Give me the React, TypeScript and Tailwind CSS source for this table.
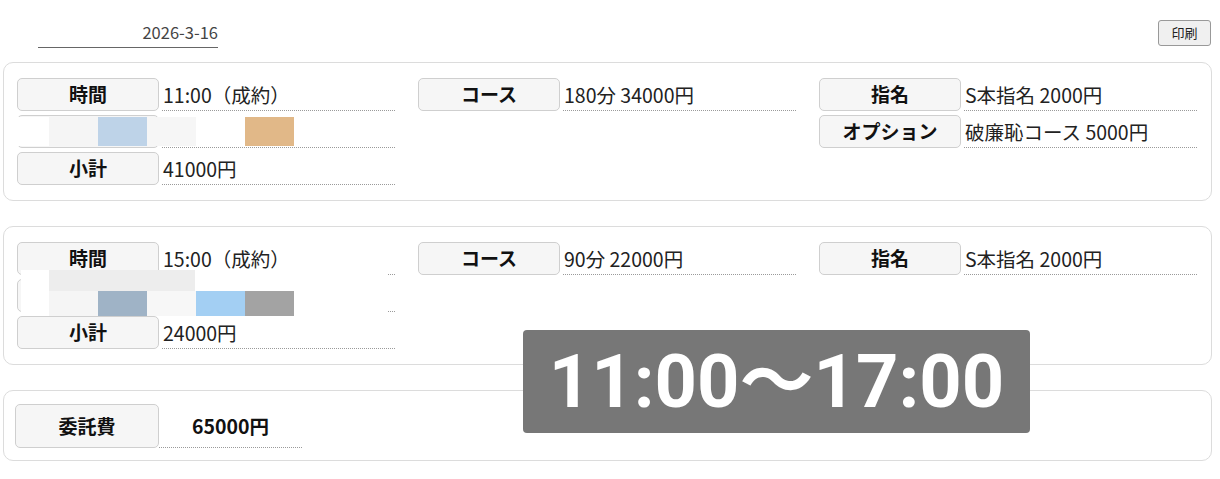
type Item = { label: string; value: string };

function Field({ label, value }: Item) {
  return (
    <div className="flex h-[33px]">
      <div className="flex w-[142px] shrink-0 items-center justify-center rounded-[5px] border border-[#cfcfcf] bg-[#f6f6f6] text-[19px] font-bold text-[#111]">
        {label}
      </div>
      <div className="ml-[3px] w-[233px] whitespace-nowrap border-b border-dotted border-[#9a9a9a] pl-[1px] text-[19.5px] leading-[33px] text-[#222]">
        {value}
      </div>
    </div>
  );
}

function Column({ items }: { items: Item[] }) {
  return (
    <div className="flex flex-col gap-[4px]">
      {items.map((it, i) => (
        <Field key={i} {...it} />
      ))}
    </div>
  );
}

// pixelated blocks that cover a name in the original
function Mosaic({ cells }: { cells: string[] }) {
  return (
    <div className="flex">
      {cells.map((c, i) => (
        <div key={i} className="h-[29px] w-[49px]" style={{ background: c }} />
      ))}
    </div>
  );
}

export default function App() {
  return (
    <div className="relative h-[479px] w-[1220px] overflow-hidden bg-white font-['Noto_Sans_CJK_JP',sans-serif] text-[#222]">
      <div className="flex items-start justify-between pr-[9px] pt-[20px]">
        <div className="ml-[38px] mt-[-20px] flex h-[48px] w-[180px] items-end justify-end border-b border-[#666] pb-[6px] text-[16.5px] leading-[18px] text-[#444]">
          2026-3-16
        </div>
        <button className="h-[26px] w-[53px] rounded-[3px] border border-[#999] bg-[#f0f0f0] text-[13px] leading-[24px] text-[#222]">
          印刷
        </button>
      </div>

      <div className="mx-[3px] mt-[14px] flex w-[1209px] flex-col gap-[25px]">
        {/* 1件目 */}
        <div className="relative grid grid-cols-[378px_378px_378px] gap-x-[23px] rounded-[10px] border border-[#dcdcdc] px-[13px] py-[15px]">
          <Column
            items={[
              { label: "時間", value: "11:00（成約）" },
              { label: "", value: "" },
              { label: "小計", value: "41000円" },
            ]}
          />
          <Column items={[{ label: "コース", value: "180分 34000円" }]} />
          <Column
            items={[
              { label: "指名", value: "S本指名 2000円" },
              { label: "オプション", value: "破廉恥コース 5000円" },
            ]}
          />
          <div className="absolute left-[13px] top-[54px] flex bg-white">
            <div className="h-[29px] w-[32px] bg-white" />
            <Mosaic cells={["#f5f5f5", "#bed3e8", "#f6f6f6", "#ffffff", "#e1b888"]} />
          </div>
        </div>

        {/* 2件目 */}
        <div className="relative grid grid-cols-[378px_378px_378px] gap-x-[23px] rounded-[10px] border border-[#dcdcdc] px-[13px] py-[15px]">
          <Column
            items={[
              { label: "時間", value: "15:00（成約）" },
              { label: "", value: "" },
              { label: "小計", value: "24000円" },
            ]}
          />
          <Column items={[{ label: "コース", value: "90分 22000円" }]} />
          <Column items={[{ label: "指名", value: "S本指名 2000円" }]} />
          <div className="absolute left-[17px] top-[43px] h-[46px] w-[367px] bg-white">
            <div className="ml-[28px] h-[21px] w-[146px] bg-[#ededed]" />
            <div className="ml-[28px] flex">
              {["#f5f5f5", "#9fb3c6", "#f7f7f7", "#a3cff3", "#a3a3a3"].map((c, i) => (
                <div key={i} className="h-[25px] w-[49px]" style={{ background: c }} />
              ))}
            </div>
          </div>
        </div>

        {/* 委託費 */}
        <div className="flex rounded-[10px] border border-[#dcdcdc] px-[11px] pb-[12px] pt-[13px]">
          <div className="flex h-[44px] w-[144px] items-center justify-center rounded-[5px] border border-[#cfcfcf] bg-[#f6f6f6] text-[19px] font-bold text-[#111]">
            委託費
          </div>
          <div className="h-[44px] w-[143px] border-b border-dotted border-[#9a9a9a] pl-[33px] text-[19.5px] font-bold leading-[44px] text-[#111]">
            65000円
          </div>
        </div>
      </div>

      <div className="absolute left-[523px] top-[330px] flex h-[103px] w-[507px] items-center justify-center rounded-[4px] bg-[#777777] font-['Roboto','Noto_Sans_CJK_JP',sans-serif] text-[74px] font-bold leading-none text-white">
        11:00〜17:00
      </div>
    </div>
  );
}
